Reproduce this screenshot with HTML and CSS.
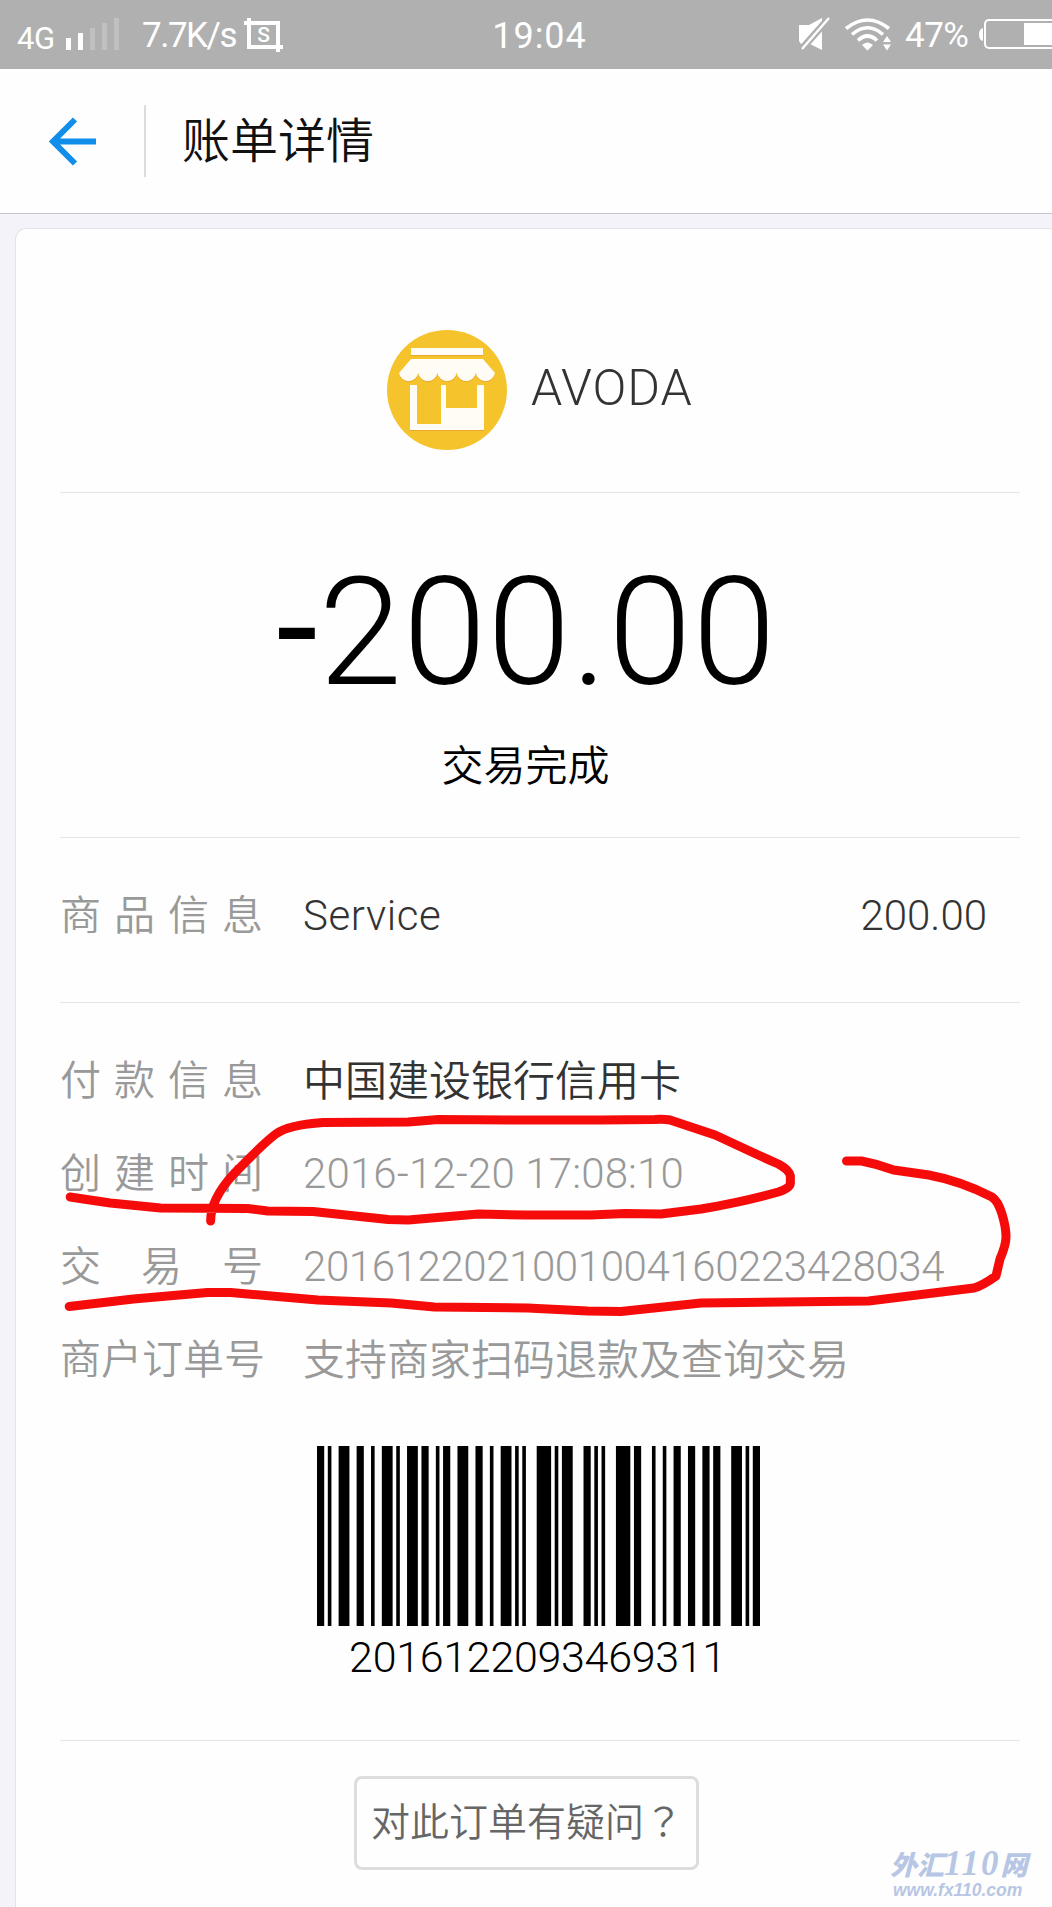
FILE: index.html
```html
<!DOCTYPE html>
<html lang="zh-CN">
<head>
    <meta charset="UTF-8">
    <meta name="viewport" content="width=device-width, initial-scale=1.0">
    <title>账单详情</title>
    <link rel="stylesheet" href="styles.css">
</head>
<body>

    <div class="status-bar">
        <div class="status-left">
            <span class="network">4G</span>
            <svg class="signal" width="53" height="32" viewBox="0 0 53 32">
                <path fill="#fff" d="M0 20h5v12H0zM12 15h5v17h-5z"/>
                <path fill="#c0c0c0" d="M24 10h5v22h-5zM36 5h5v27h-5zM48 0h5v32h-5z"/>
            </svg>
            <span class="speed">7.7K/s</span>
            <span class="capture">
                <svg width="39" height="34" viewBox="0 0 39 34" fill="none" stroke="#fff" stroke-width="4">
                    <path d="M5 0v29h34M0 5h34v29"/>
                </svg>
                <b>S</b>
            </span>
        </div>
        <span class="clock">19:04</span>
        <div class="status-right">
            <svg class="mute" width="32" height="34" viewBox="0 0 32 34">
                <path fill="#fff" d="M0 8h10L23 1v32L11 27H2l-2-3z"/>
                <path stroke="#b0b0b0" stroke-width="7" d="M1 34L31 0"/>
                <path stroke="#fff" stroke-width="2.4" d="M3 32L30 1"/>
            </svg>
            <svg class="wifi" width="46" height="33" viewBox="0 0 46 33">
                <g fill="none" stroke="#fff" stroke-width="3.6">
                    <path d="M1 10.500Q22.500-6.500 44 10.500"/>
                    <path d="M7 16.500Q22.500 3 38 16.500"/>
                    <path d="M13 22.500Q22.500 13.500 32 22.500"/>
                </g>
                <path fill="#fff" d="M17 27Q22.500 22 28 27l-5.500 5.500zM38 24l4-6 4 6zM38 26.500h8l-4 6z"/>
            </svg>
            <span class="percent">47%</span>
            <svg class="battery" width="73" height="31" viewBox="0 0 73 31">
                <path fill="#fff" d="M4 9v13q-4-1-4-6.500T4 9zM45 4h28v22H45z"/>
                <rect x="6" y="1" width="80" height="28" rx="4" fill="none" stroke="#fff" stroke-width="2"/>
            </svg>
        </div>
    </div>

    <header class="header">
        <svg class="back" width="48" height="49" viewBox="0 0 48 49" fill="none" stroke="#108ee9" stroke-width="6">
            <path d="M26 2.500L4 24.500l22 22M5 24.500h42"/>
        </svg>
        <h1>账单详情</h1>
    </header>

    <main class="card">
        <div class="merchant">
            <svg width="120" height="120" viewBox="0 0 120 120">
                <circle cx="60" cy="60" r="60" fill="#f5c42c"/>
                <g fill="#e9a82a" transform="translate(0 1)">
                    <path d="M24 18h72v7H24z"/>
                    <path d="M24 29h72l12 14a9.700 9.500 0 0 1-19.200 0a9.700 9.500 0 0 1-19.200 0a9.700 9.500 0 0 1-19.200 0a9.700 9.500 0 0 1-19.200 0a9.700 9.500 0 0 1-19.200 0z"/>
                    <path d="M23 55h7v39h24V55h5v23h31V55h7v45H23z"/>
                </g>
                <g fill="#fffcf5">
                    <path d="M24 18h72v7H24z"/>
                    <path d="M24 29h72l12 14a9.700 9.500 0 0 1-19.200 0a9.700 9.500 0 0 1-19.200 0a9.700 9.500 0 0 1-19.200 0a9.700 9.500 0 0 1-19.200 0a9.700 9.500 0 0 1-19.200 0z"/>
                    <path d="M23 55h7v39h24V55h5v23h31V55h7v45H23z"/>
                </g>
            </svg>
            <span>AVODA</span>
        </div>

        <div class="summary">
            <div class="amount"><span class="minus">-</span>200.00</div>
            <div class="state">交易完成</div>
        </div>

        <div class="row goods">
            <span class="label">商品信息</span>
            <span class="value dark service">Service</span>
            <span class="price">200.00</span>
        </div>

        <div class="details">
            <div class="row">
                <span class="label">付款信息</span>
                <span class="value dark cjk">中国建设银行信用卡</span>
            </div>
            <div class="row">
                <span class="label">创建时间</span>
                <span class="value time">2016-12-20 17:08:10</span>
            </div>
            <div class="row">
                <span class="label">交易号</span>
                <span class="value number">2016122021001004160223428034</span>
            </div>
            <div class="row">
                <span class="label full">商户订单号</span>
                <span class="value cjk">支持商家扫码退款及查询交易</span>
            </div>

            <div class="barcode">
                <!-- Code 128: bar and gap widths in modules -->
                <svg width="443" height="180" viewBox="0 0 123 50" preserveAspectRatio="none">
                    <path d="M0 25H123" stroke="#000" stroke-width="50" stroke-dasharray="2 1 1 2 3 2 2 2 1 2 3 1 1 2 3 1 2 2 1 1 2 2 3 2 2 2 1 2 3 1 1 1 1 3 4 1 1 1 3 3 2 1 1 1 1 3 4 1 2 3 1 2 1 2 2 2 2 2 2 1 2 3 3 1 1 1 2"/>
                </svg>
                <span>2016122093469311</span>
            </div>
        </div>

        <div class="help">
            <button class="help-btn" type="button">对此订单有疑问<span lang="zh-TW">？</span></button>
        </div>
    </main>

    <!-- Red pen marks over the time and the transaction number -->
    <svg class="marks" width="1052" height="1907" viewBox="0 0 1052 1907">
        <g transform="scale(1.003 1)">
            <path d="M70 1197L83 1199L110 1203L160 1208L247 1208.500L267 1211L312 1211.500L387 1219.500L407 1220L477 1214L523 1215L589 1215L623 1213.500L659 1214L699 1209Q740 1202 776 1192Q788 1188 788 1183V1176Q787 1170 776 1164Q760 1157 743 1149L713 1135Q695 1129 668 1120Q662 1119 653 1119.500L599 1120L526 1120L437 1119.500L407 1122L322 1122.500Q287 1125 275 1134Q264 1142 233 1174Q210 1199 210 1221"/>
            <path d="M844 1161H859Q875 1164 891 1170L926 1175Q958 1181 989 1197Q995 1201 999 1214Q1003 1227 1003 1237Q1003 1245 997 1259L993 1276Q979 1286 971 1288L866 1301L699 1303L619 1311.500L586 1311L526 1308L433 1307L390 1303L317 1300L230 1292.500H207L133 1299L69 1306.500"/>
        </g>
    </svg>

    <div class="watermark">
        <span class="wm-name">外汇<i>110</i>网</span>
        <span class="wm-url">www.fx110.com</span>
    </div>

</body>
</html>
```
FILE: styles.css
```css
* {
    box-sizing: border-box;
}

/* General Body Styles */
body {
    margin: 0;
    width: 1052px;
    height: 1907px;
    position: relative;
    display: flex;
    flex-direction: column;
    overflow: hidden;
    background-color: #f4f3f9;
    font-family: Roboto, 'Noto Sans CJK SC', sans-serif;
    font-weight: 350;
    color: #333;
}

svg {
    display: block;
    flex: none;
}

/* Status Bar */
.status-bar {
    height: 69px;
    flex: none;
    display: grid;
    grid-template-columns: 1fr auto 1fr;
    background-color: #b0b0b0;
    color: #fff;
    font-size: 35px;
    font-weight: 400;
    line-height: 72px;
}

.status-left,
.status-right {
    display: flex;
    align-items: flex-start;
}

.status-left {
    padding-left: 17px;
}

.network {
    width: 49px;
    font-size: 31px;
    line-height: 78px;
    letter-spacing: -0.5px;
}

.signal {
    margin-top: 18px;
}

.speed {
    width: 102px;
    margin-left: 23px;
    letter-spacing: -1.5px;
}

.capture {
    display: grid;
    margin-top: 18px;
}

.capture svg,
.capture b {
    grid-area: 1 / 1;
}

.capture b {
    font-size: 21px;
    font-weight: 500;
    line-height: 34px;
    text-align: center;
}

.clock {
    margin-left: 27px;
    font-size: 36px;
    letter-spacing: 1px;
}

.status-right {
    justify-content: flex-end;
}

.mute {
    margin: 17px 14px 0 0;
}

.wifi {
    margin-top: 18px;
}

.percent {
    margin: 0 8px 0 14px;
    width: 66px;
    letter-spacing: -0.5px;
}

.battery {
    margin-top: 19px;
}

/* Header */
.header {
    height: 145px;
    flex: none;
    display: flex;
    align-items: center;
    padding-left: 49px;
    background-color: #fefefe;
    border-bottom: 1px solid #c6c6cc;
}

.header h1 {
    height: 72px;
    margin: 0 0 0 47px;
    padding-left: 36px;
    border-left: 2px solid #dcdcdc;
    font-size: 48px;
    font-weight: 350;
    line-height: 73px;
    color: #111;
}

/* Card */
.card {
    flex: 1;
    margin: 14px 0 0 15px;
    padding: 0 32px 0 44px;
    background-color: #fefefe;
    border: solid #e4e4e8;
    border-width: 1px 0 0 1px;
    border-top-left-radius: 11px;
}

.merchant {
    height: 264px;
    display: flex;
    align-items: center;
    gap: 24px;
    padding: 58px 0 0 327px;
    border-bottom: 1px solid #e5e5e5;
    font-size: 50px;
    letter-spacing: 0.9px;
}

.merchant span {
    padding-bottom: 4px;
}

.summary {
    height: 345px;
    padding-top: 60px;
    border-bottom: 1px solid #e5e5e5;
    text-align: center;
    color: #000;
}

.amount {
    height: 160px;
    margin-left: -27px;
    font-size: 150px;
    line-height: 160px;
    letter-spacing: 1px;
}

.minus {
    font-weight: 400;
    line-height: 1;
    vertical-align: 5px;
}

.state {
    margin: 23px 29px 0 0;
    font-size: 42px;
    line-height: 62px;
}

/* Rows */
.row {
    height: 93px;
    display: flex;
    align-items: center;
    font-size: 42px;
    color: #999;
}

.label {
    width: 203px;
    margin-right: 40px;
    padding-bottom: 7px;
    font-size: 41px;
    text-align-last: justify;
    white-space: nowrap;
}

.full {
    text-align-last: left;
}

.cjk {
    padding-bottom: 7px;
}

.dark,
.price {
    color: #333;
}

.service {
    letter-spacing: 0.6px;
}

.time {
    letter-spacing: 0.15px;
}

.number {
    letter-spacing: -0.4px;
}

.price {
    margin: 0 33px 0 auto;
}

.goods {
    height: 165px;
    padding-bottom: 10px;
    border-bottom: 1px solid #e5e5e5;
}

.details {
    height: 738px;
    padding-top: 31px;
    border-bottom: 1px solid #e5e5e5;
}

/* Barcode */
.barcode {
    width: 443px;
    margin: 40px 0 0 257px;
    text-align: center;
    font-size: 43px;
    letter-spacing: -0.3px;
    line-height: 63px;
    color: #000;
}

.barcode span {
    margin-right: 2px;
}

/* Help Button */
.help {
    padding: 35px 0 0 294px;
}

.help-btn {
    width: 345px;
    height: 94px;
    padding: 0 0 8px 14px;
    background: none;
    border: 3px solid #ddd;
    border-radius: 8px;
    font-family: 'Noto Sans CJK SC', sans-serif;
    font-size: 39px;
    font-weight: 350;
    color: #666;
    text-align: left;
    white-space: nowrap;
}

.help-btn span {
    font-family: 'Noto Sans CJK TC', sans-serif;
}

/* Overlays */
.marks {
    position: absolute;
    left: 0;
    top: 0;
    fill: none;
    stroke: #f60b0b;
    stroke-width: 9;
    stroke-linecap: round;
    stroke-linejoin: round;
}

.watermark {
    position: absolute;
    left: 890px;
    top: 1850px;
    display: flex;
    flex-direction: column;
    gap: 3px;
    color: #b7c6e4;
    white-space: nowrap;
}

.wm-name {
    height: 28px;
    font-size: 27px;
    font-weight: 900;
    font-style: italic;
    line-height: 28px;
}

.wm-name i {
    font-family: 'Liberation Serif', serif;
    font-size: 35px;
    line-height: 28px;
    letter-spacing: 2px;
}

.wm-url {
    margin-left: 3px;
    font-family: 'Liberation Sans', sans-serif;
    font-size: 17.5px;
    font-weight: 700;
    font-style: italic;
    line-height: 18px;
}
```
